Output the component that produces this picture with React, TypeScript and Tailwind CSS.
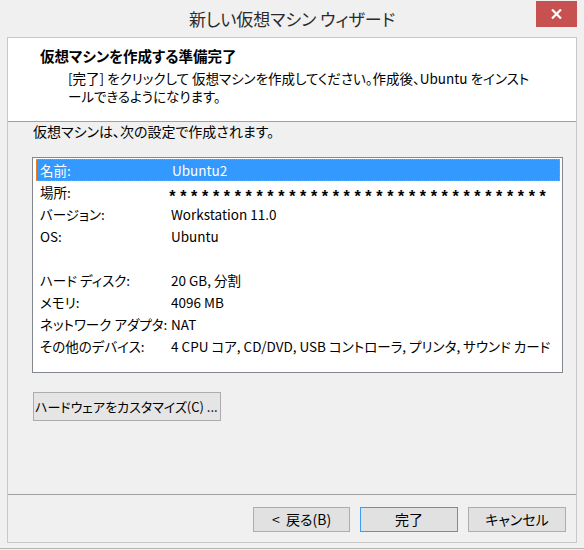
import React from 'react';

const rows: { label: string; value: string }[] = [
  { label: '名前:', value: 'Ubuntu2' },
  { label: '場所:', value: '*' },
  { label: 'バージョン:', value: 'Workstation 11.0' },
  { label: 'OS:', value: 'Ubuntu' },
  { label: '', value: '' },
  { label: 'ハード ディスク:', value: '20 GB, 分割' },
  { label: 'メモリ:', value: '4096 MB' },
  { label: 'ネットワーク アダプタ:', value: 'NAT' },
  { label: 'その他のデバイス:', value: '4 CPU コア, CD/DVD, USB コントローラ, プリンタ, サウンド カード' },
];

function Masked() {
  // password-style mask for the location
  return (
    <div className="flex pt-[9px] ml-[-4px] leading-none font-['Liberation_Sans',sans-serif] text-[16px] font-bold">
      {Array.from({ length: 35 }).map((_, i) => (
        <span key={i} className="w-[10.9px] text-center">*</span>
      ))}
    </div>
  );
}

function Button({ label, primary, className }: { label: string; primary?: boolean; className?: string }) {
  return (
    <button
      className={
        'h-[25px] bg-[#e1e1e1] text-[14px] text-black border ' +
        (primary ? 'border-[#3c9cf0] ' : 'border-[#adadad] ') +
        (className ?? '')
      }
    >
      {label}
    </button>
  );
}

export default function App() {
  return (
    <div className="w-[584px] h-[550px] bg-[#f0f0f0] overflow-hidden font-['Noto_Sans_CJK_JP',sans-serif] [font-feature-settings:'palt'] text-black">
      <div className="h-[549px] border-b border-[#b4b4b4] flex flex-col">
        {/* title bar */}
        <div className="relative h-[37px] flex items-center justify-center">
          <span className="text-[17px] text-[#2a2a2a]">新しい仮想マシン ウィザード</span>
          <div className="absolute top-[1px] right-[7px] w-[41px] h-[26px] bg-[#c75050] flex items-center justify-center">
            <svg width="11" height="10" viewBox="0 0 11 10">
              <path d="M1 0.5 L10 9.5 M10 0.5 L1 9.5" stroke="#fff" strokeWidth="2.2" />
            </svg>
          </div>
        </div>

        {/* main panel */}
        <div className="mx-[7px] h-[506px] border border-[#c8c8c8] flex flex-col">
          <div className="h-[84px] bg-white border-b border-[#a0a0a0] pl-[32px] pt-[8px]">
            <div className="text-[14.5px] font-bold leading-[20px]">仮想マシンを作成する準備完了</div>
            <div className="pl-[28px] pt-[3px] text-[13.5px] leading-[18px]">
              <div>[完了] をクリックして 仮想マシンを作成してください。作成後、Ubuntu をインスト</div>
              <div>ールできるようになります。</div>
            </div>
          </div>

          <div className="flex-1 pl-[25px]">
            <div className="text-[14px] leading-[18px]">仮想マシンは、次の設定で作成されます。</div>

            <div className="mt-[17px] ml-[-1px] w-[531px] h-[216px] bg-white border border-[#828790] pt-[1px] pl-[3px] pr-[2px]">
              {rows.map((r, i) => (
                <div
                  key={i}
                  className={
                    'h-[22px] flex items-center text-[13.5px] ' +
                    (i === 0 ? 'bg-[#3399ff] text-white border border-dotted border-[#f08a30]' : '')
                  }
                >
                  <div className={'w-[135px] ' + (i === 0 ? 'pl-[3px]' : 'pl-[4px]')}>{r.label}</div>
                  <div className="flex-1 self-stretch flex items-center">
                    {r.value === '*' ? <Masked /> : r.value}
                  </div>
                </div>
              ))}
            </div>

            <button className="mt-[19px] h-[29px] w-[188px] bg-[#e5e5e5] border border-[#acacac] text-[13px] text-left pl-[1px]">
              ハードウェアをカスタマイズ(C) ...
            </button>
          </div>

          <div className="h-[48px] border-t border-[#a0a0a0] flex items-center justify-end gap-[10px] pr-[10px] pt-[1px]">
            <Button label="<  戻る(B)" className="w-[97px] whitespace-pre" />
            <Button label="完了" primary className="w-[98px]" />
            <Button label="キャンセル" className="w-[98px]" />
          </div>
        </div>
      </div>
    </div>
  );
}
